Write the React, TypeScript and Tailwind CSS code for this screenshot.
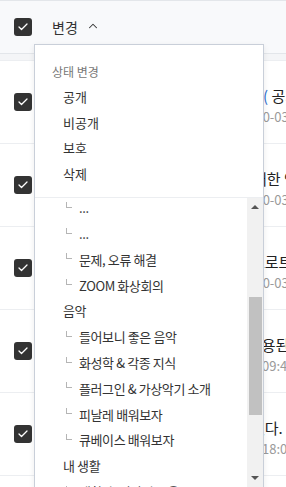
import { Check, ChevronUp } from 'lucide-react';

const rows = [
  { tp: 'pl-[221px]', mark: '(', title: ' 공지사항 필독', dp: 'pl-[199px]', date: '2020-03-12 11:20' },
  { tp: 'pl-[211px]', mark: '', title: '대한 안내입니다', dp: 'pl-[199px]', date: '2020-03-10 14:02' },
  { tp: 'pl-[209px]', mark: '', title: '트로트 자료', dp: 'pl-[199px]', date: '2020-03-08 09:15' },
  { tp: 'pl-[206px]', mark: '', title: '사용된 예시', dp: 'pl-[220px]', date: '09:47' },
  { tp: 'pl-[209px]', mark: '', title: '있다. 확인해보세요', dp: 'pl-[220px]', date: '18:05' },
];

const statusItems = ['공개', '비공개', '보호', '삭제'];

type Cat = { name: string; child?: boolean };
const cats: Cat[] = [
  { name: '...', child: true },
  { name: '...', child: true },
  { name: '문제, 오류 해결', child: true },
  { name: 'ZOOM 화상회의', child: true },
  { name: '음악' },
  { name: '들어보니 좋은 음악', child: true },
  { name: '화성학 & 각종 지식', child: true },
  { name: '플러그인 & 가상악기 소개', child: true },
  { name: '피날레 배워보자', child: true },
  { name: '큐베이스 배워보자', child: true },
  { name: '내 생활' },
  { name: '생활 속 이야기 모음', child: true },
];

function Box() {
  return (
    <span className="flex h-[18px] w-[18px] shrink-0 items-center justify-center rounded-[3px] bg-[#333333]">
      <Check size={12} strokeWidth={2.6} color="#ffffff" />
    </span>
  );
}

export default function App() {
  return (
    <div className="relative h-[487px] w-[286px] overflow-hidden bg-white font-['Noto_Sans_CJK_KR',sans-serif] text-[#333]">
      {/* header */}
      <div className="flex h-[54px] items-center gap-[20px] border-t border-b border-[#e3e6ea] bg-[#f8f9fb] pl-[14px]">
        <Box />
        <span className="flex items-center gap-[8px] text-[14px] text-[#333]">
          변경 <ChevronUp size={14} strokeWidth={1.8} className="mt-[-2px]" />
        </span>
      </div>
      <div className="h-[7px] border-b border-[#eceef1] bg-[#f4f5f7]" />

      {/* rows */}
      {rows.map((r, i) => (
        <div key={i} className="flex h-[83px] items-center border-b border-[#eceef1] pl-[14px]">
          <Box />
          <div className="ml-[10px] flex min-w-0 flex-1 flex-col overflow-hidden whitespace-nowrap pt-[7px]">
            <div className={`text-[15px] leading-[20px] text-[#222] ${r.tp}`}>
              <span className="text-[#2f6fd0]">{r.mark}</span>
              {r.title}
            </div>
            <div className={`mt-[2px] text-[13px] leading-[18px] text-[#9a9a9a] ${r.dp}`}>{r.date}</div>
          </div>
        </div>
      ))}

      {/* dropdown menu */}
      <div className="absolute left-[34px] top-[44px] w-[230px] border border-[#c9cfd9] bg-white shadow-[0_2px_6px_rgba(0,0,0,0.08)]">
        <div className="pt-[15px] pb-[11px]">
          <div className="h-[24px] pl-[17px] text-[12px] leading-[24px] text-[#777]">상태 변경</div>
          {statusItems.map((s) => (
            <div key={s} className="h-[25.5px] pl-[28px] text-[13px] leading-[25.5px] text-[#333]">
              {s}
            </div>
          ))}
        </div>
        <div className="flex h-[300px] border-t border-[#eceef1]">
          <div className="min-w-0 flex-1 overflow-hidden">
            <div className="mt-[-3px]">
              {cats.map((c, i) => (
                <div
                  key={i}
                  className={`flex h-[25.8px] items-center whitespace-nowrap text-[13px] tracking-[-0.4px] text-[#333] ${c.child ? 'pl-[31px]' : 'pl-[28px]'}`}
                >
                  {c.child && <span className="mr-[7px] mt-[-6px] h-[6px] w-[6px] border-b border-l border-[#b5b5b5]" />}
                  {c.name}
                </div>
              ))}
            </div>
          </div>
          <div className="flex w-[16px] flex-col items-center bg-[#f1f1f1]">
            <div className="flex h-[18px] items-center justify-center">
              <span className="h-0 w-0 border-x-[4px] border-b-[4px] border-x-transparent border-b-[#555]" />
            </div>
            <div className="mt-[81px] h-[118px] w-[13px] bg-[#c1c1c1]" />
            <div className="flex-1" />
            <div className="flex h-[25px] items-start justify-center pt-[4px]">
              <span className="h-0 w-0 border-x-[4px] border-t-[4px] border-x-transparent border-t-[#555]" />
            </div>
          </div>
        </div>
      </div>
    </div>
  );
}
